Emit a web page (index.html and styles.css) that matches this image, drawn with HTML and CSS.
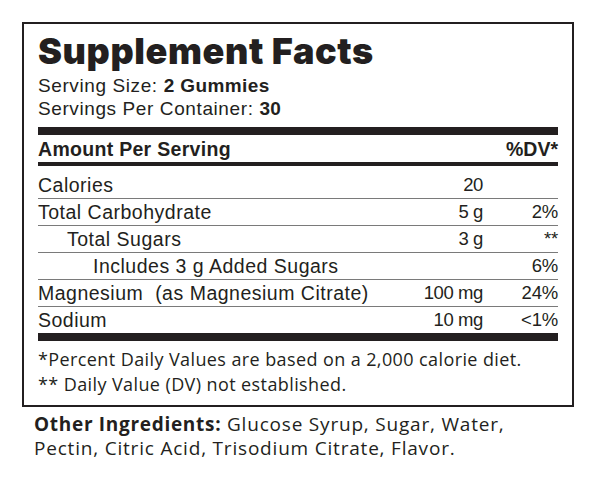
FILE: index.html
```html
<!DOCTYPE html>
<html>
<head>
<meta charset="utf-8">
<link rel="stylesheet" href="styles.css">
</head>
<body>
<div class="label">
  <h1 class="title">Supplement Facts</h1>
  <p class="serving">Serving Size: <b>2 Gummies</b></p>
  <p class="serving">Servings Per Container: <b>30</b></p>
  <div class="bar bar-thick"></div>
  <div class="row row-head"><span class="name">Amount Per Serving</span><span class="amt"></span><span class="dv">%DV*</span></div>
  <div class="bar bar-medium"></div>
  <div class="row row-first"><span class="name">Calories</span><span class="amt">20</span><span class="dv"></span></div>
  <div class="row"><span class="name">Total Carbohydrate</span><span class="amt">5 g</span><span class="dv">2%</span></div>
  <div class="row"><span class="name indent-1">Total Sugars</span><span class="amt">3 g</span><span class="dv">**</span></div>
  <div class="row"><span class="name indent-2">Includes 3 g Added Sugars</span><span class="amt"></span><span class="dv">6%</span></div>
  <div class="row"><span class="name">Magnesium&nbsp; (as Magnesium Citrate)</span><span class="amt">100 mg</span><span class="dv">24%</span></div>
  <div class="row"><span class="name">Sodium</span><span class="amt">10 mg</span><span class="dv">&lt;1%</span></div>
  <div class="bar bar-thick"></div>
  <p class="note">*Percent Daily Values are based on a 2,000 calorie diet.<br>** Daily Value (DV) not established.</p>
</div>
<p class="ingredients"><b>Other Ingredients:</b> Glucose Syrup, Sugar, Water,<br>Pectin, Citric Acid, Trisodium Citrate, Flavor.</p>
</body>
</html>
```

FILE: styles.css
```css
* { box-sizing: border-box; }
html, body { margin: 0; padding: 0; background: #fff; }
body { color: #231f20; }

.label {
  margin: 22px 0 0 22px;
  width: 552px;
  border: 2px solid #231f20;
  padding: 7px 14px 8px 14px;
}

.title {
  margin: 0;
  font-family: "Inter", "Liberation Sans", sans-serif;
  font-weight: 900;
  font-size: 36px;
  line-height: 40px;
  letter-spacing: 0.6px;
}

.serving {
  margin: 0;
  font-family: "Liberation Sans", Arial, sans-serif;
  font-size: 19px;
  line-height: 23px;
  letter-spacing: 0.6px;
}
.serving:first-of-type { margin-top: 3px; }
.serving b { font-weight: 700; letter-spacing: 0.4px; }

.bar { background: #231f20; }
.bar-thick { height: 8px; margin-top: 7px; }
.bar-medium { height: 4px; }

.row {
  display: grid;
  grid-template-columns: 1fr 100px 75px;
  font-family: "Liberation Sans", Arial, sans-serif;
  font-size: 19.5px;
  line-height: 26px;
  border-top: 1px solid #7a7a7a;
}
.row .name { letter-spacing: 0.5px; white-space: nowrap; }
.row .amt, .row .dv { text-align: right; }
.row .amt { font-size: 18.5px; letter-spacing: -0.4px; }
.row .dv { font-size: 18.5px; letter-spacing: -0.2px; }

.row-head {
  border-top: none;
  font-weight: 700;
  height: 27px;
  padding-top: 1px;
}
.row-head .name { letter-spacing: 0.3px; }
.row-head .dv { letter-spacing: 0; font-size: 19.5px; }
.row-first { border-top: none; padding-top: 6px; }
.row + .bar-thick { margin-top: 0; }

.indent-1 { padding-left: 29px; }
.indent-2 { padding-left: 55px; }

.note {
  margin: 0;
  padding-top: 6px;
  font-family: "Open Sans", "Liberation Sans", sans-serif;
  font-size: 18px;
  line-height: 25px;
  letter-spacing: 0.4px;
}

.ingredients {
  margin: 5px 0 0 34px;
  font-family: "Open Sans", "Liberation Sans", sans-serif;
  font-size: 19px;
  line-height: 24px;
  letter-spacing: 0.8px;
}
.ingredients b { font-weight: 700; letter-spacing: 0.7px; }
```
